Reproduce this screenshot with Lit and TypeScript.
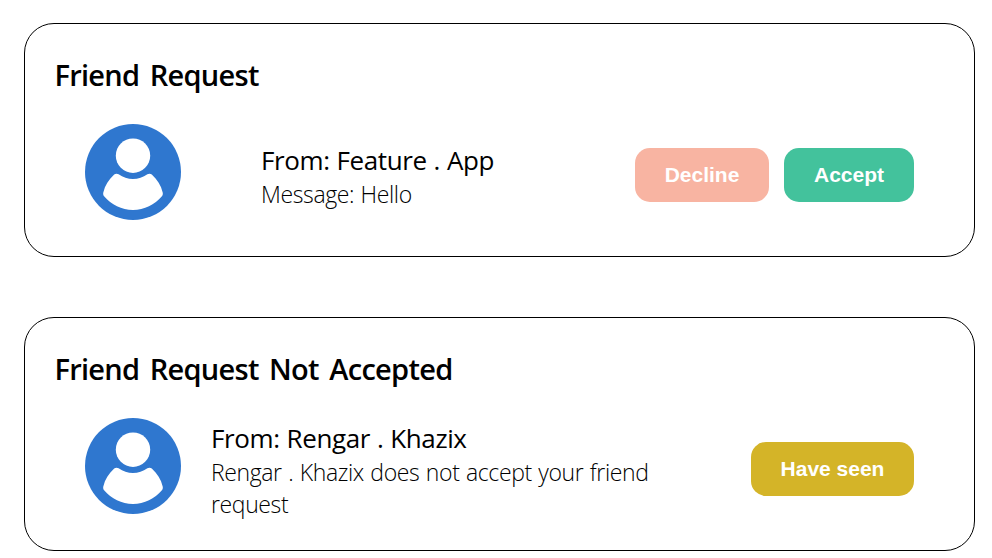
import { LitElement, html, css } from "lit";
import { customElement, property } from "lit/decorators.js";

@customElement("user-avatar")
export class UserAvatar extends LitElement {
  static styles = css`
    :host { display: block; width: 96px; height: 96px; flex: none; }
    svg { display: block; }
  `;
  render() {
    return html`<svg width="96" height="96" viewBox="0 0 96 96">
      <circle cx="48" cy="48" r="48" fill="#2f77cf" />
      <circle cx="48" cy="31.7" r="17.2" fill="#fff" />
      <path fill="#fff" d="M33.6 50.3C38 53.3 42.8 55 48 55S58 53.3 62.4 50.3C63.8 49.4 65.6 49.5 66.8 50.6C72.3 55.6 76 61.5 77.7 68.5C78 70 77.8 71.2 76.9 72.3C69.6 80.8 59.4 86 48 86S26.4 80.8 19.1 72.3C18.2 71.2 18 70 18.3 68.5C20 61.5 23.7 55.6 29.2 50.6C30.4 49.5 32.2 49.4 33.6 50.3Z" />
    </svg>`;
  }
}

@customElement("notice-card")
export class NoticeCard extends LitElement {
  @property() heading = "";
  @property() from = "";
  @property() message = "";
  @property({ type: Boolean, reflect: true }) request = false;

  static styles = css`
    :host {
      display: block;
      box-sizing: border-box;
      height: 234px;
      border: 1px solid #000;
      border-radius: 30px;
      padding: 30px;
      font-family: "Segoe UI", "Open Sans", sans-serif;
      color: #000;
    }
    h2 {
      margin: 0 0 0 -0.6px;
      font-size: 29px;
      line-height: 42px;
      font-weight: 600;
      letter-spacing: -0.72px;
      word-spacing: 3.6px;
      white-space: nowrap;
    }
    .row { display: flex; align-items: center; height: 102px; margin: 28px 30px 0; }
    user-avatar { align-self: flex-start; }
    .text { width: 450px; margin: 2px 0 0 30px; }
    :host([request]) .text { width: auto; margin: 3px 0 0 80px; }
    .from { font-size: 26px; line-height: 35px; letter-spacing: -0.4px; word-spacing: 0.6px; white-space: nowrap; }
    .message { font-size: 23px; line-height: 32px; font-weight: 300; letter-spacing: -0.38px; word-spacing: 0.9px; }
    .actions { display: flex; gap: 15px; margin-left: auto; }
    button {
      border: 0;
      border-radius: 15px;
      height: 54px;
      padding: 0;
      color: #fff;
      font: bold 21px "Liberation Sans", Arial, sans-serif;
    }
    .decline { width: 134px; background: #f8b4a2; }
    .accept { width: 130px; background: #43c29c; }
    .seen { width: 163px; background: #d4b428; }
  `;

  render() {
    return html`
      <h2>${this.heading}</h2>
      <div class="row">
        <user-avatar></user-avatar>
        <div class="text">
          <div class="from">From: ${this.from}</div>
          <div class="message">${this.message}</div>
        </div>
        <div class="actions">
          ${this.request
            ? html`<button class="decline">Decline</button><button class="accept">Accept</button>`
            : html`<button class="seen">Have seen</button>`}
        </div>
      </div>
    `;
  }
}

@customElement("app-root")
export class AppRoot extends LitElement {
  static styles = css`
    :host {
      display: flex;
      flex-direction: column;
      gap: 60px;
      box-sizing: border-box;
      height: 558px;
      padding: 23px 17px 0 24px;
      background: #fff;
      overflow: hidden;
    }
    notice-card { flex: none; }
  `;
  render() {
    return html`
      <notice-card request heading="Friend Request" from="Feature . App" message="Message: Hello"></notice-card>
      <notice-card heading="Friend Request Not Accepted" from="Rengar . Khazix"
        message="Rengar . Khazix does not accept your friend request"></notice-card>
    `;
  }
}
